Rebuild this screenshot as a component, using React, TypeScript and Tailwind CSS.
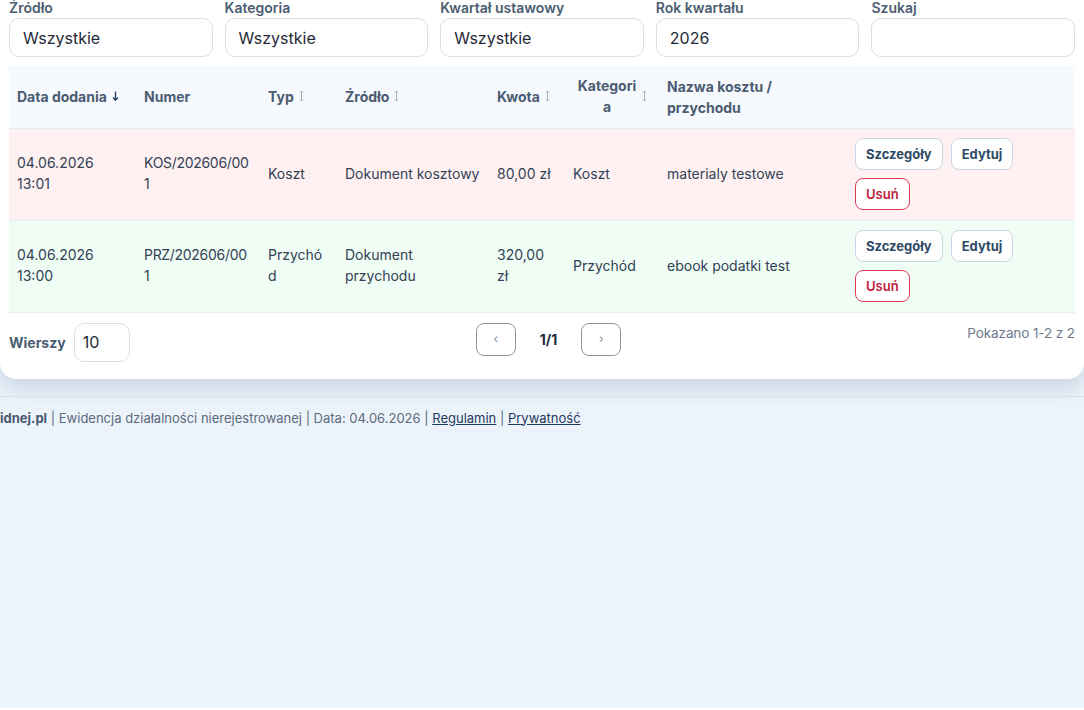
import React from "react";

type Row = {
  date: string;
  time: string;
  number: string;
  type: string;
  source: string;
  amount: string;
  category: string;
  name: string;
  tone: "cost" | "income";
};

const rows: Row[] = [
  {
    date: "04.06.2026",
    time: "13:01",
    number: "KOS/202606/001",
    type: "Koszt",
    source: "Dokument kosztowy",
    amount: "80,00 zł",
    category: "Koszt",
    name: "materialy testowe",
    tone: "cost",
  },
  {
    date: "04.06.2026",
    time: "13:00",
    number: "PRZ/202606/001",
    type: "Przychód",
    source: "Dokument przychodu",
    amount: "320,00 zł",
    category: "Przychód",
    name: "ebook podatki test",
    tone: "income",
  },
];

const filters = [
  { label: "Źródło", value: "Wszystkie" },
  { label: "Kategoria", value: "Wszystkie" },
  { label: "Kwartał ustawowy", value: "Wszystkie" },
  { label: "Rok kwartału", value: "2026" },
  { label: "Szukaj", value: "" },
];

// small up/down arrow used next to sortable column titles
const SortIcon = ({ active }: { active?: boolean }) =>
  active ? (
    <svg width="7" height="10" viewBox="0 0 7 10" className="text-[#1e3a5f]">
      <path d="M3.5 0.5v8.5M1 6.5l2.5 2.7 2.5-2.7" fill="none" stroke="currentColor" strokeWidth="1.3" />
    </svg>
  ) : (
    <svg width="5" height="12" viewBox="0 0 5 12" className="text-[#a9b5c4]">
      <path d="M2.5 1v10M0.8 2.8l1.7-1.8 1.7 1.8M0.8 9.2l1.7 1.8 1.7-1.8" fill="none" stroke="currentColor" strokeWidth="1" />
    </svg>
  );

const SortHead = ({ label, active, sortable = true, maxW }: { label: string; active?: boolean; sortable?: boolean; maxW?: string }) => (
  <button className="inline-flex items-center gap-[5px] text-center font-bold text-[14px] leading-[21px] text-[#4b5c71]">
    <span className={maxW}>{label}</span>
    {sortable && <SortIcon active={active} />}
  </button>
);

const App = () => {
  return (
    <div className="min-h-[710px] bg-gradient-to-b from-[#e9f0f8] to-[#eff5fd] font-['Inter',sans-serif] text-[#334155]">
      <div className="rounded-b-2xl bg-white px-[9px] pb-[17px] shadow-[0_8px_22px_rgba(90,115,150,0.26)]">
        {/* filters */}
        <div className="-mt-[2px] grid grid-cols-5 gap-x-[12px]">
          {filters.map((f) => (
            <div key={f.label} className="flex flex-col">
              <label className="text-[14px] font-semibold leading-[20px] text-[#4b5c71]">{f.label}</label>
              <div className="flex h-[39px] items-center rounded-[10px] border border-[#d6dfea] px-[13px] text-[16px] text-[#1f2937]">
                {f.value}
              </div>
            </div>
          ))}
        </div>

        {/* table */}
        <table className="mt-[9px] w-full table-fixed border-collapse">
          <colgroup>
            <col className="w-[127px]" />
            <col className="w-[124px]" />
            <col className="w-[77px]" />
            <col className="w-[152px]" />
            <col className="w-[76px]" />
            <col className="w-[94px]" />
            <col className="w-[188px]" />
            <col />
          </colgroup>
          <thead>
            <tr className="h-[62px] border-b border-[#e6edf5] bg-[#f6f9fe] text-left">
              <th className="px-[8px] pb-[2px]"><SortHead label="Data dodania" active /></th>
              <th className="px-[8px] pb-[2px]"><SortHead label="Numer" sortable={false} /></th>
              <th className="px-[8px] pb-[2px]"><SortHead label="Typ" /></th>
              <th className="px-[8px] pb-[2px]"><SortHead label="Źródło" /></th>
              <th className="px-[8px] pb-[2px]"><SortHead label="Kwota" /></th>
              <th className="px-[8px] pb-[2px]">
                <div className="flex items-center justify-between pl-[3px] pr-[4px]">
                  <span className="max-w-[62px] text-center font-bold text-[14px] leading-[21px] text-[#4b5c71] [overflow-wrap:anywhere]">Kategoria</span>
                  <SortIcon />
                </div>
              </th>
              <th className="px-[8px] pb-[2px]"><SortHead label="Nazwa kosztu / przychodu" sortable={false} maxW="max-w-[112px] text-left" /></th>
              <th className="px-[8px]" />
            </tr>
          </thead>
          <tbody>
            {rows.map((r) => (
              <tr
                key={r.number}
                className={`h-[92px] border-b border-[#e6edf5] text-[14px] leading-[21px] text-[#334155] ${r.tone === "cost" ? "bg-[#fff1f2]" : "bg-[#effdf4]"}`}
              >
                <td className="px-[8px] pb-[2px]">
                  {r.date}
                  <br />
                  {r.time}
                </td>
                <td className="px-[8px] pb-[2px] tracking-[-0.3px] [overflow-wrap:anywhere]">{r.number}</td>
                <td className="px-[8px] pb-[2px] [overflow-wrap:anywhere]">{r.type}</td>
                <td className="px-[8px] pb-[2px]">{r.source}</td>
                <td className="px-[8px] pb-[2px]">{r.amount}</td>
                <td className="px-[8px] pb-[2px]">{r.category}</td>
                <td className="px-[8px] pb-[2px]">{r.name}</td>
                <td className="px-[8px] py-[9px]">
                  <div className="flex flex-wrap gap-[8px] pr-[40px]">
                    <button className="h-[32px] rounded-[8px] border border-[#c9d6e6] bg-white px-[10px] text-[13px] font-bold text-[#2e4a66]">
                      Szczegóły
                    </button>
                    <button className="h-[32px] rounded-[8px] border border-[#c9d6e6] bg-white px-[10px] text-[13px] font-bold text-[#2e4a66]">
                      Edytuj
                    </button>
                    <button className="h-[32px] rounded-[8px] border border-[#dc3b55] bg-white px-[10px] text-[13px] font-semibold text-[#c0213d]">
                      Usuń
                    </button>
                  </div>
                </td>
              </tr>
            ))}
          </tbody>
        </table>

        {/* pagination */}
        <div className="mt-[10px] flex items-start justify-between">
          <div className="flex items-center gap-[8px]">
            <span className="text-[14px] font-bold text-[#4b5c71]">Wierszy</span>
            <div className="flex h-[39px] w-[56px] items-center rounded-[10px] border border-[#d6dfea] px-[8px] text-[16px] text-[#1f2937]">
              10
            </div>
          </div>
          <div className="flex items-center gap-[24px]">
            <button className="flex h-[33px] w-[40px] items-center justify-center rounded-[8px] border border-[#8f959c] text-[12px] text-[#8a929c]">
              ‹
            </button>
            <span className="text-[14px] font-bold text-[#1e293b]">1/1</span>
            <button className="flex h-[33px] w-[40px] items-center justify-center rounded-[8px] border border-[#8f959c] text-[12px] text-[#8a929c]">
              ›
            </button>
          </div>
          <span className="text-[13.5px] leading-[20px] tracking-[-0.1px] text-[#6b7a8c]">Pokazano 1-2 z 2</span>
        </div>
      </div>

      {/* page footer */}
      <footer className="mt-[17px] border-t border-[#d9e2ec] pt-[11px] text-[13px] leading-[20px] text-[#5b6b7e]">
        <span className="font-bold text-[#475a70]">idnej.pl</span> | Ewidencja działalności nierejestrowanej | Data: 04.06.2026 |{" "}
        <a className="text-[#1e3a5f] underline">Regulamin</a> | <a className="text-[#1e3a5f] underline">Prywatność</a>
      </footer>
    </div>
  );
};

export default App;
